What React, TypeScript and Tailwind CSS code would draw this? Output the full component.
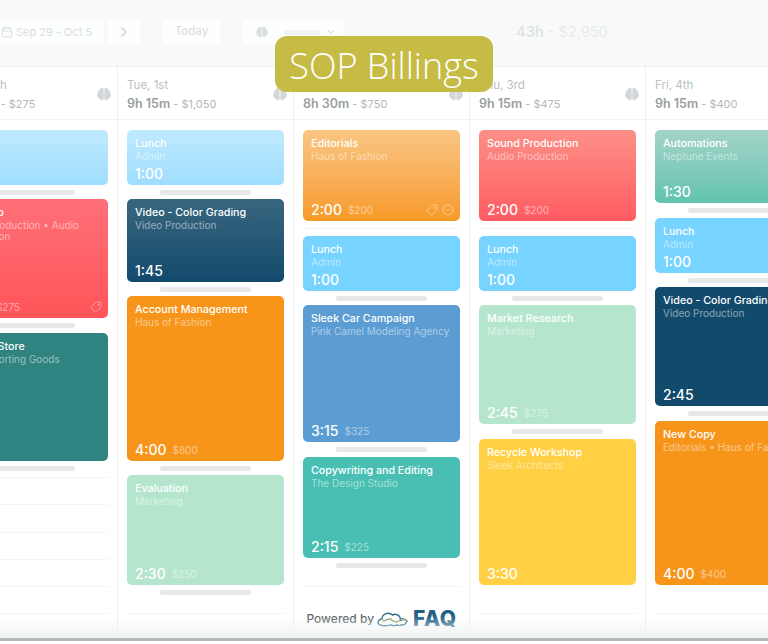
import { ChevronRight, ChevronDown, Calendar, Tag, CircleCheck } from "lucide-react";
import { FaBrain } from "react-icons/fa";

type EventItem = {
  title: string;
  client: string;
  time: string;
  amount?: string;
  card: string; // height + background
  after: string; // spacing below the card
  marker: "bar" | "dash" | "none";
  tag?: boolean;
  check?: boolean;
};

type Day = {
  label: string;
  hours: string;
  total: string;
  events: EventItem[];
  restTop: string;
  rest: string[];
  footer?: boolean;
};

const lunchFaded = "bg-gradient-to-b from-[#bfeaff] to-[#9fddfe]";
const lunch = "bg-[#77d3ff]";
const orange = "bg-[#f7941a]";
const mint = "bg-[#b5e6cd]";

const days: Day[] = [
  {
    label: "Mon, 30th",
    hours: "8h 00m",
    total: "$275",
    events: [
      { title: "Lunch", client: "Admin", time: "1:00", card: `h-[55px] ${lunchFaded}`, after: "h-[14px]", marker: "bar" },
      { title: "In Studio", client: "Audio Production • Audio Production", time: "2:00", amount: "$275", card: "h-[119px] bg-gradient-to-b from-[#ff6f78] to-[#ff5458]", after: "h-[15px]", marker: "bar", tag: true },
      { title: "Market Store", client: "Apex Sporting Goods", time: "3:00", card: "h-[128px] bg-[#2f8381]", after: "h-[15px]", marker: "bar" },
    ],
    restTop: "mt-[1px]",
    rest: ["h-[27px]", "h-[28px]", "h-[27px]", "h-[27px]", "h-[27px]", "h-[13px]"],
  },
  {
    label: "Tue, 1st",
    hours: "9h 15m",
    total: "$1,050",
    events: [
      { title: "Lunch", client: "Admin", time: "1:00", card: `h-[55px] ${lunchFaded}`, after: "h-[14px]", marker: "bar" },
      { title: "Video - Color Grading", client: "Video Production", time: "1:45", card: "h-[83px] bg-gradient-to-b from-[#38667f] to-[#124a6c]", after: "h-[14px]", marker: "bar" },
      { title: "Account Management", client: "Haus of Fashion", time: "4:00", amount: "$800", card: `h-[165px] ${orange}`, after: "h-[14px]", marker: "bar" },
      { title: "Evaluation", client: "Marketing", time: "2:30", amount: "$250", card: `h-[110px] ${mint}`, after: "h-[15px]", marker: "bar" },
    ],
    restTop: "mt-[13px]",
    rest: ["h-[13px]"],
  },
  {
    label: "Wed, 2nd",
    hours: "8h 30m",
    total: "$750",
    events: [
      { title: "Editorials", client: "Haus of Fashion", time: "2:00", amount: "$200", card: "h-[91px] bg-gradient-to-b from-[#f9c581] to-[#f79a24]", after: "h-[15px]", marker: "dash", tag: true, check: true },
      { title: "Lunch", client: "Admin", time: "1:00", card: `h-[55px] ${lunch}`, after: "h-[14px]", marker: "bar" },
      { title: "Sleek Car Campaign", client: "Pink Camel Modeling Agency", time: "3:15", amount: "$325", card: "h-[137px] bg-[#5b9dd2]", after: "h-[15px]", marker: "bar" },
      { title: "Copywriting and Editing", client: "The Design Studio", time: "2:15", amount: "$225", card: "h-[101px] bg-[#49bfb3]", after: "h-[15px]", marker: "bar" },
    ],
    restTop: "mt-[13px]",
    rest: [],
    footer: true,
  },
  {
    label: "Thu, 3rd",
    hours: "9h 15m",
    total: "$475",
    events: [
      { title: "Sound Production", client: "Audio Production", time: "2:00", amount: "$200", card: "h-[91px] bg-gradient-to-b from-[#fb8f87] to-[#ff5a62]", after: "h-[15px]", marker: "dash" },
      { title: "Lunch", client: "Admin", time: "1:00", card: `h-[55px] ${lunch}`, after: "h-[14px]", marker: "bar" },
      { title: "Market Research", client: "Marketing", time: "2:45", amount: "$275", card: `h-[119px] ${mint}`, after: "h-[15px]", marker: "bar" },
      { title: "Recycle Workshop", client: "Sleek Architects", time: "3:30", card: "h-[146px] bg-[#ffd044]", after: "h-[15px]", marker: "none" },
    ],
    restTop: "mt-[13px]",
    rest: ["h-[13px]"],
  },
  {
    label: "Fri, 4th",
    hours: "9h 15m",
    total: "$400",
    events: [
      { title: "Automations", client: "Neptune Events", time: "1:30", card: "h-[73px] bg-gradient-to-b from-[#a3d3c9] to-[#60c4ae]", after: "h-[15px]", marker: "bar" },
      { title: "Lunch", client: "Admin", time: "1:00", card: `h-[55px] ${lunch}`, after: "h-[14px]", marker: "bar" },
      { title: "Video - Color Grading", client: "Video Production", time: "2:45", card: "h-[119px] bg-[#124a6c]", after: "h-[15px]", marker: "bar" },
      { title: "New Copy", client: "Editorials • Haus of Fashion", time: "4:00", amount: "$400", card: `h-[164px] ${orange}`, after: "h-[15px]", marker: "none" },
    ],
    restTop: "mt-[13px]",
    rest: ["h-[13px]"],
  },
];

function EventCard({ e }: { e: EventItem }) {
  return (
    <div className={`${e.card} rounded-[5px] pl-2 pr-[6px] pt-[7px] flex flex-col text-white`}>
      <div className="text-[10.7px] leading-[13px] font-medium whitespace-nowrap">{e.title}</div>
      <div className="text-[10px] leading-[11px] mt-[1px] text-white/50">{e.client}</div>
      <div className="mt-auto flex items-center">
        <span className="text-[14px] leading-[22px] font-medium">{e.time}</span>
        {e.amount && <span className="ml-[6px] text-[10px] mt-[1px] text-white/50">{e.amount}</span>}
        <span className="ml-auto flex items-center gap-[4px] text-white/60">
          {e.tag && <Tag size={12} strokeWidth={1.5} className="rotate-90" />}
          {e.check && <CircleCheck size={12} strokeWidth={1.5} />}
        </span>
      </div>
    </div>
  );
}

function Marker({ e }: { e: EventItem }) {
  return (
    <div className={`${e.after} flex items-center justify-center`}>
      {e.marker === "bar" && <div className="w-[91px] h-[5px] rounded-full bg-[#e6e8ea]" />}
      {e.marker === "dash" && <div className="w-full border-t border-dotted border-[#e8eaea]" />}
    </div>
  );
}

function DayColumn({ day }: { day: Day }) {
  return (
    <div className="w-[176px] shrink-0 border-r border-[#eef0f0] flex flex-col">
      <div className="h-[53px] border-b border-[#f0f1f1] pl-[9px] pr-[6px] pt-[10px] flex justify-between">
        <div>
          <div className="text-[11.5px] leading-[16px] text-[#bcc0c2]">{day.label}</div>
          <div className="text-[11px] leading-[20px] mt-[1px] whitespace-nowrap">
            <span className="text-[12.5px] font-semibold text-[#9a9ea0]">{day.hours}</span>
            <span className="text-[#b4b8ba]"> - {day.total}</span>
          </div>
        </div>
        <FaBrain size={14} className="text-[#d3d7d9] mt-[10px]" />
      </div>
      <div className="pl-[9px] pr-[9px] pt-[10px]">
        {day.events.map((e) => (
          <div key={e.title + e.time}>
            <EventCard e={e} />
            <Marker e={e} />
          </div>
        ))}
        <div className={day.restTop}>
          {day.rest.map((h, i) => (
            <div key={i} className={`${h} border-t border-dotted border-[#e8eaea]`} />
          ))}
        </div>
        {day.footer && (
          <div className="border-t border-dotted border-[#e8eaea] pt-[22px] flex items-center justify-center gap-[3px]">
            <span className="text-[12px] font-medium text-[#5c6468] whitespace-nowrap">Powered by</span>
            <svg width="33" height="18" viewBox="0 0 34 18" fill="none">
              <path d="M3 15c-3-1-2-6 2-6 0-5 7-8 11-4 3-2 8 0 8 4 3-1 6 1 7 2-1 2-2 5-6 4-1 1-3 1-4 0-2 1-5 1-7 0-3 1-8 1-11 0z" stroke="#2d6a8f" strokeWidth="1.4" />
              <path d="M6 11l7-2 6 3 8-2" stroke="#2d6a8f" strokeWidth="1" />
              <circle cx="7" cy="11" r="1.4" fill="#d6b93a" />
              <circle cx="14" cy="9" r="1.4" fill="#d6b93a" />
              <circle cx="20" cy="12" r="1.4" fill="#d6b93a" />
              <circle cx="28" cy="10" r="1.4" fill="#d6b93a" />
            </svg>
            <span className="text-[21px] leading-[20px] font-extrabold tracking-[0.5px] text-[#1f5f86]">FAQ</span>
          </div>
        )}
      </div>
    </div>
  );
}

export default function App() {
  return (
    <div className="relative w-[768px] h-[644px] overflow-hidden bg-white font-['Inter','Liberation_Sans',sans-serif]">
      {/* Toolbar */}
      <div className="h-[67px] bg-[#f8fafa] border-b border-[#f0f1f1] flex items-center pb-[2px] text-[#dcdfe0]">
        <div className="w-[104px] h-[26px] bg-[#fdfefe] flex items-center pl-[1px] gap-[3px] text-[11px]">
          <Calendar size={12} />
          <span className="whitespace-nowrap">Sep 29 - Oct 5</span>
        </div>
        <div className="ml-[4px] w-[32px] h-[26px] bg-[#fdfefe] flex items-center justify-center">
          <ChevronRight size={16} strokeWidth={3} />
        </div>
        <div className="ml-[23px] w-[57px] h-[26px] bg-[#fdfefe] flex items-center justify-center text-[11.5px] font-medium">Today</div>
        <div className="ml-[23px] w-[101px] h-[26px] bg-[#fdfefe] flex items-center pl-[13px] pr-[8px]">
          <FaBrain size={12} />
          <div className="ml-[16px] w-[36px] h-[5px] bg-[#f2f4f4]" />
          <ChevronDown size={10} strokeWidth={3} className="ml-auto" />
        </div>
        <div className="ml-[172px] text-[14.5px] whitespace-nowrap">
          <span className="font-semibold text-[#e0e3e4]">43h</span>
          <span className="text-[#e8eaeb]"> - $2,950</span>
        </div>
      </div>

      {/* Week grid, Monday is cut off by the left edge */}
      <div className="flex -ml-[58px]">
        {days.map((d) => (
          <DayColumn key={d.label} day={d} />
        ))}
      </div>

      {/* Fade and bottom rule */}
      <div className="absolute left-0 right-0 bottom-[6px] h-[22px] bg-gradient-to-b from-white/0 to-[#f1f3f3] pointer-events-none" />
      <div className="absolute left-0 right-0 bottom-[3px] h-[3px] bg-[#b4b8b9]" />
      <div className="absolute left-0 right-0 bottom-0 h-[3px] bg-white" />

      {/* Title badge */}
      <div className="absolute left-[275px] top-[36px] w-[218px] h-[56px] pt-[4px] rounded-[12px] bg-[#c6bb45] flex items-center justify-center text-white text-[36px] font-light font-['Open_Sans',sans-serif] whitespace-nowrap">
        SOP Billings
      </div>
    </div>
  );
}
